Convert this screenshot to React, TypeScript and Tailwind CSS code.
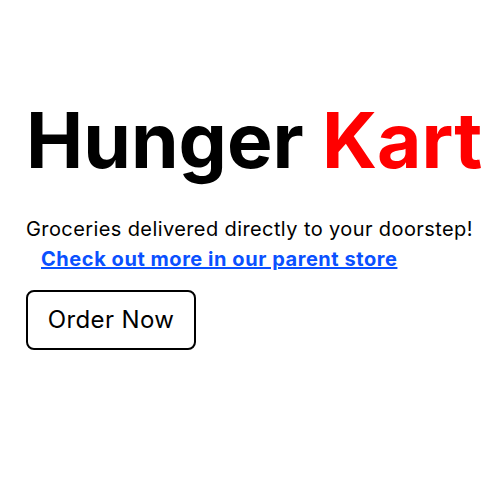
import React from "react";

const App = () => {
    return (
        <div className="min-h-[500px] bg-white pl-[26px] pt-[97px] font-['Inter',sans-serif] text-black">
            <h1 className="text-[76.6px] font-bold leading-[86px] whitespace-nowrap">
                Hunger <span className="text-[#ff0000]">Kart</span>
            </h1>
            <p className="mt-[34px] text-[20px] leading-[24px] tracking-[0.4px] whitespace-nowrap">
                Groceries delivered directly to your doorstep!
            </p>
            <a
                href="#"
                className="ml-[15px] mt-[6px] block text-[20px] font-bold leading-[24px] tracking-[0.55px] text-[#0a50ff] underline whitespace-nowrap"
            >
                Check out more in our parent store
            </a>
            <button className="mt-[19px] h-[60px] w-[170px] rounded-[8px] border-2 border-black text-[24px] tracking-[0.4px]">
                Order Now
            </button>
        </div>
    );
};

export default App;
